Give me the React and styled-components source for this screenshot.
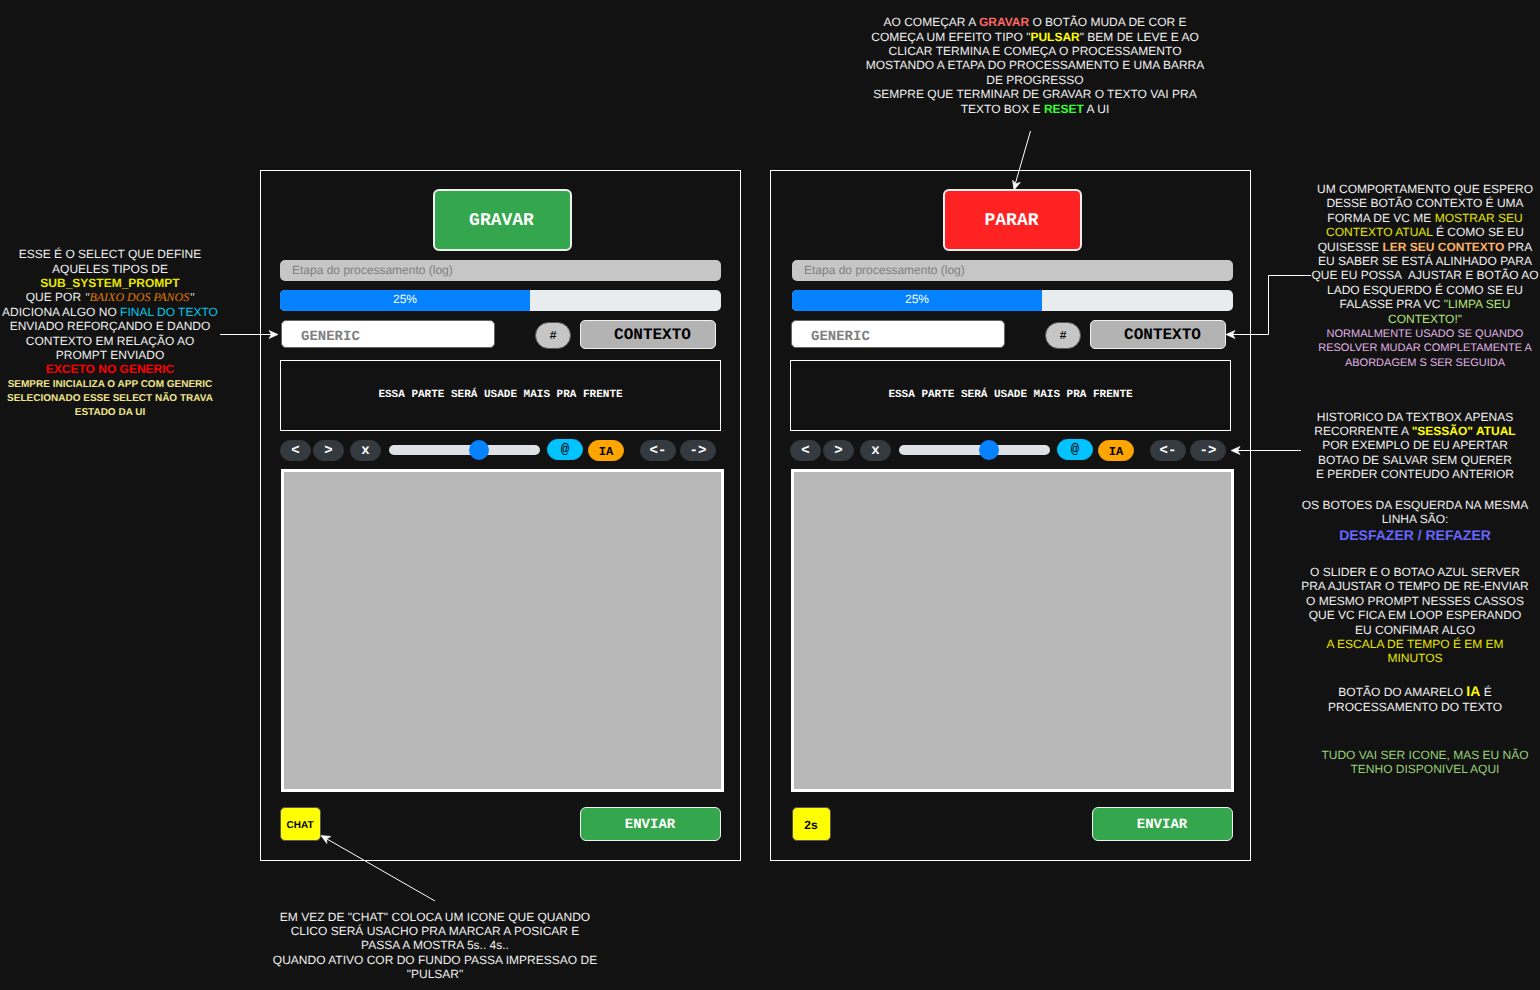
import React from "react";
import styled, { createGlobalStyle } from "styled-components";

const Global = createGlobalStyle`
  html, body { margin: 0; padding: 0; background: #121212; }
  body {
    font-family: "Liberation Sans", Arial, sans-serif;
    overflow: hidden;
    text-rendering: geometricPrecision;
  }
  button { text-rendering: geometricPrecision; }
`;

const MONO = `"Liberation Mono", "Courier New", monospace`;
const SANS = `"Liberation Sans", Arial, sans-serif`;

const Board = styled.div`
  position: relative;
  width: 1540px;
  height: 990px;
  background: #121212;
  overflow: hidden;
`;

const Wires = styled.svg`
  position: absolute;
  left: 0;
  top: 0;
  width: 1540px;
  height: 990px;
  pointer-events: none;
  z-index: 2;
`;

const Note = styled.div`
  position: absolute;
  left: ${(p) => p.$center - 200}px;
  top: ${(p) => p.$top}px;
  width: 400px;
  text-align: center;
  font: 12px/14.4px ${SANS};
  color: #f0f0f0;
  white-space: nowrap;
`;

const Ink = styled.span`
  color: ${(p) => p.$c};
  font-weight: ${(p) => (p.$b ? 700 : 400)};
`;

const Pano = styled.span`
  color: #e07b00;
  font-style: italic;
  font-family: "Liberation Serif", "Times New Roman", serif;
`;

const SmallBlock = styled.div`
  font-size: 10px;
  font-weight: 700;
  color: #f0e68c;
  line-height: 14px;
  margin-top: 1.5px;
`;

const SoftBlock = styled.div`
  font-size: 11px;
  color: #e1b5e8;
  line-height: 14.5px;
  margin-top: 0.5px;
`;

const Large = styled.span`
  font-size: 14px;
  font-weight: 700;
  line-height: 17px;
  color: ${(p) => p.$c};
`;

const Panel = styled.section`
  position: absolute;
  left: ${(p) => p.$left}px;
  top: 170px;
  width: 481px;
  height: 691px;
  box-sizing: border-box;
  border: 1px solid #ffffff;
  padding: 18px 19px 0;
  display: flex;
  flex-direction: column;
  align-items: flex-start;
`;

const RecordButton = styled.button`
  align-self: flex-start;
  margin-left: 153px;
  width: 139px;
  height: 62px;
  box-sizing: border-box;
  border: 2px solid #f0f0f0;
  border-radius: 6px;
  background: ${(p) => p.$bg};
  color: #fff;
  font: 700 18px ${MONO};
  padding: 2px 2px 0 0;
`;

const LogBar = styled.div`
  width: 441px;
  height: 21px;
  margin-top: 9px;
  margin-left: ${(p) => p.$shift}px;
  box-sizing: border-box;
  padding-left: 12px;
  background: #c6c6c6;
  border-radius: 5px;
  color: #808080;
  font: 12px/20px ${SANS};
`;

const ProgressTrack = styled.div`
  width: 441px;
  height: 21px;
  margin-top: 9px;
  margin-left: ${(p) => p.$shift}px;
  background: #e9ecef;
  border-radius: 5px;
  overflow: hidden;
`;

const ProgressFill = styled.div`
  width: 250px;
  height: 100%;
  background: #0582ff;
  color: #fff;
  text-align: center;
  font: 12px/19px ${SANS};
`;

const SelectRow = styled.div`
  display: flex;
  align-items: flex-start;
  margin-top: 9px;
  margin-left: 1px;
  height: 29px;
`;

const SelectBox = styled.div`
  width: 214px;
  height: 28px;
  box-sizing: border-box;
  padding-left: 19px;
  background: #fff;
  border: 1px solid #666;
  border-radius: 5px;
  color: #808080;
  font: 700 14px/32px ${MONO};
`;

const HashButton = styled.button`
  width: 36px;
  height: 27px;
  margin-left: 40px;
  margin-top: 2px;
  padding: 1px 0 0;
  border: 1px solid #555;
  border-radius: 14px;
  background: #c6c6c6;
  color: #111;
  font: 700 12px ${MONO};
`;

const ContextButton = styled.button`
  width: 136px;
  height: 29px;
  margin-left: 9px;
  box-sizing: border-box;
  padding: 0 0 0 9px;
  border: 1px solid #f0f0f0;
  border-radius: 5px;
  background: #b3b3b3;
  color: #000;
  font: 700 16px ${MONO};
`;

const InfoBox = styled.div`
  width: 441px;
  height: 71px;
  margin-top: 11px;
  box-sizing: border-box;
  border: 1px solid #fff;
  display: flex;
  align-items: center;
  justify-content: center;
  color: #fff;
  font: 700 11px ${MONO};
  padding-bottom: 2px;
`;

const ToolRow = styled.div`
  display: flex;
  align-items: center;
  height: 22px;
  margin-top: 8px;
`;

const Pill = styled.button`
  width: ${(p) => p.$w}px;
  height: 21px;
  margin-left: ${(p) => p.$ml || 0}px;
  margin-top: ${(p) => p.$mt || 0}px;
  padding: ${(p) => p.$pt ?? 2}px 0 0;
  border: 1px solid ${(p) => p.$edge || "#343a40"};
  border-radius: 11px;
  background: ${(p) => p.$bg || "#343a40"};
  color: ${(p) => p.$fg || "#fff"};
  font: ${(p) => (p.$thin ? 400 : 700)} ${(p) => p.$fs || 14}px ${MONO};
`;

const SliderTrack = styled.div`
  position: relative;
  width: 151px;
  height: 10px;
  margin-left: 8px;
  margin-top: -1px;
  background: #dee2e6;
  border-radius: 5px;
`;

const SliderThumb = styled.div`
  position: absolute;
  left: 80.4px;
  top: -5px;
  width: 20px;
  height: 20px;
  border-radius: 50%;
  background: #0582ff;
`;

const Screen = styled.div`
  width: 443px;
  height: 323px;
  margin-top: 8px;
  margin-left: 1px;
  box-sizing: border-box;
  border: 3px solid #fff;
  background: #b8b8b8;
`;

const Footer = styled.div`
  width: 441px;
  display: flex;
  justify-content: space-between;
  margin-top: 15px;
  margin-left: ${(p) => p.$shift}px;
`;

const ChatButton = styled.button`
  width: ${(p) => p.$w}px;
  height: 34px;
  padding: 2px 1px 0 0;
  border: 1px solid #555;
  border-radius: 5px;
  background: #ffff00;
  color: #000;
  font: 700 ${(p) => p.$fs}px ${SANS};
`;

const SendButton = styled.button`
  width: 141px;
  height: 34px;
  box-sizing: border-box;
  padding: 2px 1px 0 0;
  border: 1px solid #f0f0f0;
  border-radius: 6px;
  background: #34a64d;
  color: #fff;
  font: 700 14px ${MONO};
`;

function Head({ x, y, angle }) {
  return (
    <polygon
      points="0,0 -9,-4 -6.5,0 -9,4"
      fill="#fff"
      stroke="#fff"
      strokeWidth="0.6"
      transform={`translate(${x} ${y}) rotate(${angle})`}
    />
  );
}

function Connectors() {
  const s = { stroke: "#fff", strokeWidth: 1, fill: "none" };
  return (
    <Wires viewBox="0 0 1540 990">
      <path d="M220 334.5H272" {...s} />
      <Head x={278} y={334.5} angle={0} />
      <path d="M1030.5 131L1015.5 183" {...s} />
      <Head x={1014} y={190} angle={106} />
      <path d="M1311 275.5H1268.5V334.5H1232" {...s} />
      <Head x={1226} y={334.5} angle={180} />
      <path d="M1301 450.5H1237" {...s} />
      <Head x={1231} y={450.5} angle={180} />
      <path d="M435 901L327 839" {...s} />
      <Head x={321} y={835.5} angle={209.8} />
    </Wires>
  );
}

function Device({ left, shift, rec, recBg, chat, chatW, chatFs }) {
  return (
    <Panel $left={left}>
      <RecordButton $bg={recBg}>{rec}</RecordButton>
      <LogBar $shift={shift}>Etapa do processamento (log)</LogBar>
      <ProgressTrack $shift={shift}>
        <ProgressFill>25%</ProgressFill>
      </ProgressTrack>
      <SelectRow>
        <SelectBox>GENERIC</SelectBox>
        <HashButton>#</HashButton>
        <ContextButton>CONTEXTO</ContextButton>
      </SelectRow>
      <InfoBox>ESSA PARTE SERÁ USADE MAIS PRA FRENTE</InfoBox>
      <ToolRow>
        <Pill $w={31}>&lt;</Pill>
        <Pill $w={31} $ml={2}>&gt;</Pill>
        <Pill $w={31} $ml={6}>x</Pill>
        <SliderTrack>
          <SliderThumb />
        </SliderTrack>
        <Pill $w={36} $ml={7} $mt={-2} $pt={1} $bg="#00c3ff" $edge="#00c3ff" $fg="#000" $thin>@</Pill>
        <Pill $w={36} $ml={5} $pt={3} $bg="#ffa500" $edge="#ffa500" $fg="#000" $fs={12}>IA</Pill>
        <Pill $w={36} $ml={16}>&lt;-</Pill>
        <Pill $w={36} $ml={4}>-&gt;</Pill>
      </ToolRow>
      <Screen />
      <Footer $shift={shift}>
        <ChatButton $w={chatW} $fs={chatFs}>{chat}</ChatButton>
        <SendButton>ENVIAR</SendButton>
      </Footer>
    </Panel>
  );
}

export default function App() {
  return (
    <Board>
      <Global />
      <Device left={260} shift={0} rec="GRAVAR" recBg="#34a64d" chat="CHAT" chatW={41} chatFs={10} />
      <Device left={770} shift={2} rec="PARAR" recBg="#ff2222" chat="2s" chatW={39} chatFs={12} />

      <Note $center={110} $top={247.2}>
        ESSE É O SELECT QUE DEFINE<br />
        AQUELES TIPOS DE<br />
        <Ink $c="#e6e600" $b>SUB_SYSTEM_PROMPT</Ink><br />
        QUE POR <Pano><Ink $c="#f0f0f0">"</Ink>BAIXO DOS PANOS<Ink $c="#f0f0f0">"</Ink></Pano><br />
        ADICIONA ALGO NO <Ink $c="#00c8e8">FINAL DO TEXTO</Ink><br />
        ENVIADO REFORÇANDO E DANDO<br />
        CONTEXTO EM RELAÇÃO AO<br />
        PROMPT ENVIADO<br />
        <Ink $c="#ff0000" $b>EXCETO NO GENERIC</Ink>
        <SmallBlock>
          SEMPRE INICIALIZA O APP COM GENERIC<br />
          SELECIONADO ESSE SELECT NÃO TRAVA<br />
          ESTADO DA UI
        </SmallBlock>
      </Note>

      <Note $center={1035} $top={15.1}>
        AO COMEÇAR A <Ink $c="#ff6666" $b>GRAVAR</Ink> O BOTÃO MUDA DE COR E<br />
        COMEÇA UM EFEITO TIPO "<Ink $c="#ffff00" $b>PULSAR</Ink>" BEM DE LEVE E AO<br />
        CLICAR TERMINA E COMEÇA O PROCESSAMENTO<br />
        MOSTANDO A ETAPA DO PROCESSAMENTO E UMA BARRA<br />
        DE PROGRESSO<br />
        SEMPRE QUE TERMINAR DE GRAVAR O TEXTO VAI PRA<br />
        TEXTO BOX E <Ink $c="#33ff33" $b>RESET</Ink> A UI
      </Note>

      <Note $center={1425} $top={182}>
        UM COMPORTAMENTO QUE ESPERO<br />
        DESSE BOTÃO CONTEXTO É UMA<br />
        FORMA DE VC ME <Ink $c="#e6e600">MOSTRAR SEU</Ink><br />
        <Ink $c="#e6e600">CONTEXTO ATUAL</Ink> É COMO SE EU<br />
        QUISESSE <Ink $c="#ffb366" $b>LER SEU CONTEXTO</Ink> PRA<br />
        EU SABER SE ESTÁ ALINHADO PARA<br />
        QUE EU POSSA&nbsp; AJUSTAR E BOTÃO AO<br />
        LADO ESQUERDO É COMO SE EU<br />
        FALASSE PRA VC <Ink $c="#b3e67a">"LIMPA SEU</Ink><br />
        <Ink $c="#b3e67a">CONTEXTO!"</Ink>
        <SoftBlock>
          NORMALMENTE USADO SE QUANDO<br />
          RESOLVER MUDAR COMPLETAMENTE A<br />
          ABORDAGEM S SER SEGUIDA
        </SoftBlock>
      </Note>

      <Note $center={1415} $top={409.6}>
        HISTORICO DA TEXTBOX APENAS<br />
        RECORRENTE A <Ink $c="#ffff00" $b>"SESSÃO" ATUAL</Ink><br />
        POR EXEMPLO DE EU APERTAR<br />
        BOTAO DE SALVAR SEM QUERER<br />
        E PERDER CONTEUDO ANTERIOR
      </Note>

      <Note $center={1415} $top={498}>
        OS BOTOES DA ESQUERDA NA MESMA<br />
        LINHA SÃO:<br />
        <Large $c="#6666ff">DESFAZER / REFAZER</Large>
      </Note>

      <Note $center={1415} $top={565}>
        O SLIDER E O BOTAO AZUL SERVER<br />
        PRA AJUSTAR O TEMPO DE RE-ENVIAR<br />
        O MESMO PROMPT NESSES CASSOS<br />
        QUE VC FICA EM LOOP ESPERANDO<br />
        EU CONFIMAR ALGO<br />
        <Ink $c="#e6e600">A ESCALA DE TEMPO É EM EM<br />MINUTOS</Ink>
      </Note>

      <Note $center={1415} $top={683}>
        BOTÃO DO AMARELO <Large $c="#ffff00">IA</Large> É<br />
        PROCESSAMENTO DO TEXTO
      </Note>

      <Note $center={1425} $top={748}>
        <Ink $c="#97d077">TUDO VAI SER ICONE, MAS EU NÃO<br />TENHO DISPONIVEL AQUI</Ink>
      </Note>

      <Note $center={435} $top={909.6}>
        EM VEZ DE "CHAT" COLOCA UM ICONE QUE QUANDO<br />
        CLICO SERÁ USACHO PRA MARCAR A POSICAR E<br />
        PASSA A MOSTRA 5s.. 4s..<br />
        QUANDO ATIVO COR DO FUNDO PASSA IMPRESSAO DE<br />
        "PULSAR"
      </Note>

      <Connectors />
    </Board>
  );
}
